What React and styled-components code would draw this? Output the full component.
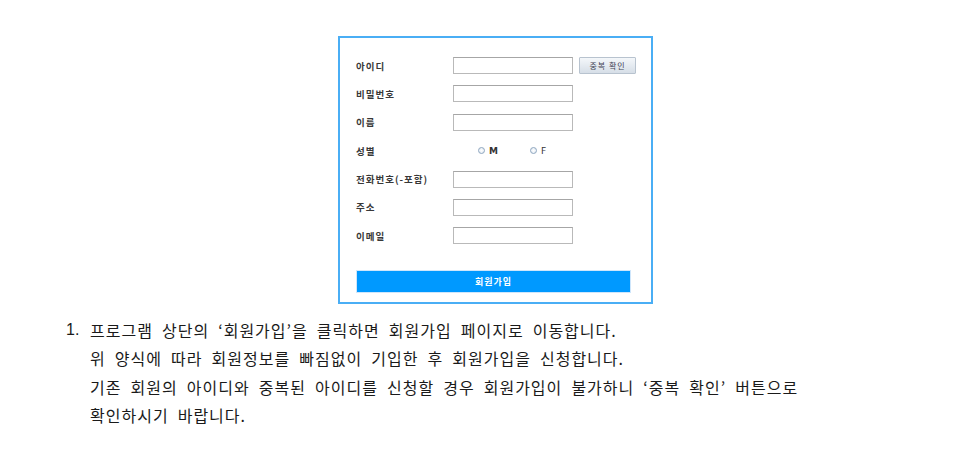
import React from "react";
import styled, { createGlobalStyle } from "styled-components";

const GlobalStyle = createGlobalStyle`
  body {
    margin: 0;
    background: #fff;
    font-family: "Noto Sans CJK KR", "Noto Sans", sans-serif;
  }
`;

const Page = styled.div`
  padding-top: 36px;
`;

const Panel = styled.div`
  margin-left: 338px;
  width: 315px;
  box-sizing: border-box;
  border: 2px solid #4aaef5;
  padding: 19px 20px 9px 16px;
`;

const Form = styled.div`
  display: grid;
  grid-template-columns: 97px 1fr;
  grid-auto-rows: 17px;
  row-gap: 11.4px;
  align-items: center;
`;

const Label = styled.div`
  font-size: 9.5px;
  font-weight: 700;
  color: #383838;
  letter-spacing: 1px;
`;

const Field = styled.div`
  display: flex;
  align-items: center;
  height: 17px;
`;

const Input = styled.input`
  width: 120px;
  height: 17px;
  box-sizing: border-box;
  border: 1px solid #b9b9b9;
  border-top-color: #a6a6a6;
  background: #fff;
  margin: 0;
  padding: 0 3px;
  outline: none;
`;

const CheckButton = styled.button`
  margin-left: 6px;
  width: 57px;
  height: 17px;
  box-sizing: border-box;
  border: 1px solid #b8c3cf;
  border-radius: 1px;
  background: linear-gradient(#f4f7fa, #d6dee7);
  font-family: inherit;
  font-size: 8px;
  color: #445;
  letter-spacing: 1px;
  padding: 0;
`;

const RadioGroup = styled.div`
  display: flex;
  align-items: center;
  padding-left: 25px;
  gap: 32px;
`;

const RadioOption = styled.label`
  display: flex;
  align-items: center;
  gap: 4px;
  font-family: "DejaVu Sans", sans-serif;
  font-size: 9px;
  font-weight: ${(p) => (p.bold ? 700 : 400)};
  color: #333;
`;

const RadioDot = styled.span`
  width: 5px;
  height: 5px;
  border-radius: 50%;
  border: 1px solid #8ea6bf;
  background: radial-gradient(#ffffff, #dfe8f1);
`;

const Submit = styled.button`
  margin-top: 25.5px;
  width: 275px;
  height: 23px;
  border: 1px solid #cfe6fb;
  background: #0099ff;
  color: #fff;
  font-family: inherit;
  font-size: 9px;
  font-weight: 700;
  letter-spacing: 1px;
  padding: 0;
  display: block;
`;

const Notes = styled.div`
  margin-top: 12px;
  display: flex;
  padding-left: 66px;
  font-size: 16px;
  line-height: 28.5px;
  color: #1a1a1a;
  letter-spacing: 1px;
  word-spacing: 4.5px;
`;

const Num = styled.div`
  width: 24px;
  font-family: "Liberation Sans", sans-serif;
  letter-spacing: 0;
`;

const Lines = styled.div`
  display: flex;
  flex-direction: column;
`;

const rows = [
  { label: "아이디", check: true },
  { label: "비밀번호", type: "password" },
  { label: "이름" },
  { label: "성별", radio: true },
  { label: "전화번호(-포함)" },
  { label: "주소" },
  { label: "이메일" },
];

const lines = [
  "프로그램 상단의 ‘회원가입’을 클릭하면 회원가입 페이지로 이동합니다.",
  "위 양식에 따라 회원정보를 빠짐없이 기입한 후 회원가입을 신청합니다.",
  "기존 회원의 아이디와 중복된 아이디를 신청할 경우 회원가입이 불가하니 ‘중복 확인’ 버튼으로",
  "확인하시기 바랍니다.",
];

export default function App() {
  return (
    <Page>
      <GlobalStyle />
      <Panel>
        <Form>
          {rows.map((r) => (
            <React.Fragment key={r.label}>
              <Label>{r.label}</Label>
              <Field>
                {r.radio ? (
                  <RadioGroup>
                    <RadioOption bold>
                      <RadioDot />M
                    </RadioOption>
                    <RadioOption>
                      <RadioDot />F
                    </RadioOption>
                  </RadioGroup>
                ) : (
                  <Input type={r.type || "text"} />
                )}
                {r.check && <CheckButton>중복 확인</CheckButton>}
              </Field>
            </React.Fragment>
          ))}
        </Form>
        <Submit>회원가입</Submit>
      </Panel>
      <Notes>
        <Num>1.</Num>
        <Lines>
          {lines.map((l) => (
            <div key={l}>{l}</div>
          ))}
        </Lines>
      </Notes>
    </Page>
  );
}
